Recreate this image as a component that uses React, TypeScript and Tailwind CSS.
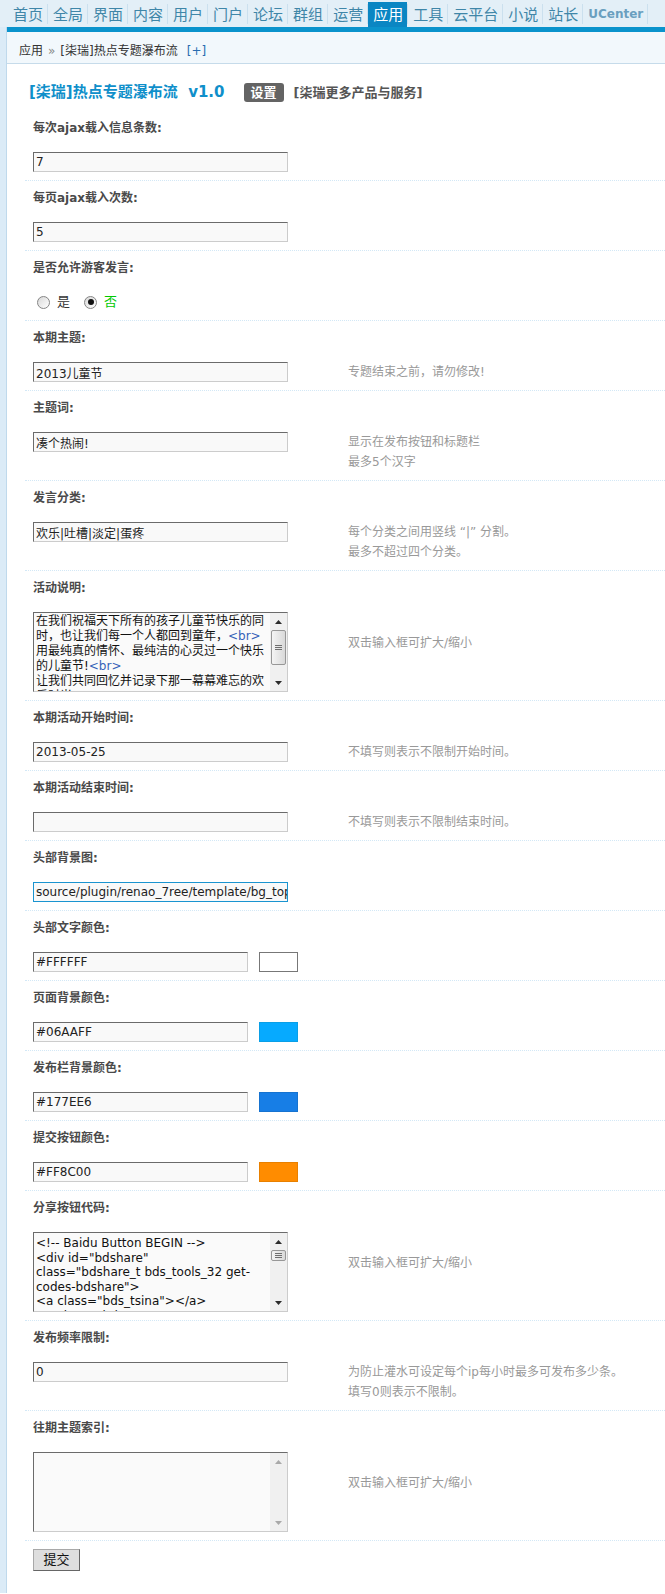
import React from 'react'

const navItems = ['首页', '全局', '界面', '内容', '用户', '门户', '论坛', '群组', '运营', '应用', '工具', '云平台', '小说', '站长']

function TopNav() {
  return (
    <div className="flex h-[27px] items-end bg-[#e3eff7] pl-[8px]">
      {navItems.map((item) => (
        <React.Fragment key={item}>
          <span
            className={
              item === '应用'
                ? "h-[25px] bg-[#0a86c3] pl-[5px] pr-[4px] font-['Noto_Sans_CJK_SC',sans-serif] text-[15px] leading-[24px] text-white"
                : "h-[25px] pl-[5px] pr-[4px] font-['Noto_Sans_CJK_SC',sans-serif] text-[15px] leading-[24px] text-[#3f86a8]"
            }
          >
            {item}
          </span>
          <span className="h-[20px] w-px self-center bg-[#cbe0ee]" />
        </React.Fragment>
      ))}
      <span className="h-[25px] pl-[5px] pr-[4px] text-[12px] font-bold leading-[24px] text-[#6a9fbf]">UCenter</span>
      <span className="h-[20px] w-px self-center bg-[#cbe0ee]" />
    </div>
  )
}

function Breadcrumb() {
  return (
    <div className="h-[32px] border-b border-[#c6dbea] bg-[#f2f8fc] pl-[12px] pt-[10px] text-[12px] leading-[18px] text-[#333]">
      应用<span className="mx-[5px] text-[#888]">»</span>[柒瑞]热点专题瀑布流
      <span className="ml-[9px] text-[#2a6cb0]">[+]</span>
    </div>
  )
}

function Row({
  label,
  children,
  hint,
  hintTop = false,
}: {
  label: React.ReactNode
  children: React.ReactNode
  hint?: React.ReactNode
  hintTop?: boolean
}) {
  return (
    <div className="border-b border-dotted border-[#d3e8f6] pb-[8px] pl-[8px]">
      <div className="pb-[15px] pt-[8px] text-[12px] font-bold leading-[18px] text-[#4a4a4a]">{label}</div>
      <div className="flex">
        <div className="w-[315px] shrink-0">{children}</div>
        {hint && (
          <div className={hintTop ? 'pt-[21px] text-[12px] leading-[20px] text-[#999]' : 'text-[12px] leading-[20px] text-[#999]'}>
            {hint}
          </div>
        )}
      </div>
    </div>
  )
}

// classic txt input: dark top/left edge, light bottom/right edge
function TextInput({ value, short = false, focused = false }: { value: string; short?: boolean; focused?: boolean }) {
  const size = short ? 'w-[215px]' : 'w-[255px]'
  const edge = focused
    ? 'border-[#1a94d0]'
    : 'border-t-[#6b6b6b] border-l-[#6b6b6b] border-r-[#cccccc] border-b-[#cccccc]'
  return (
    <input
      readOnly
      defaultValue={value}
      className={`${size} ${edge} block h-[20px] border bg-[#f9f9f9] pl-[2px] text-[12px] text-[#222] outline-none`}
    />
  )
}

function ColorInput({ value, swatch }: { value: string; swatch: string }) {
  return (
    <div className="flex items-center">
      <TextInput value={value} short />
      <span className={`${swatch} ml-[11px] block h-[20px] w-[39px] border`} />
    </div>
  )
}

function Arrow({ down = false, dim = false }: { down?: boolean; dim?: boolean }) {
  return (
    <svg width="7" height="4" viewBox="0 0 7 4" className="block">
      <path d={down ? 'M0 0h7L3.5 4z' : 'M3.5 0L7 4H0z'} fill={dim ? '#a9a9a9' : '#2b2b2b'} />
    </svg>
  )
}

function Thumb({ tall }: { tall: boolean }) {
  return (
    <div
      className={
        tall
          ? 'mx-[1px] flex h-[35px] items-center justify-center rounded-[2px] border border-[#979797] bg-gradient-to-r from-[#f4f4f4] to-[#d9d9d9]'
          : 'mx-[1px] flex h-[11px] items-center justify-center rounded-[2px] border border-[#979797] bg-gradient-to-r from-[#f4f4f4] to-[#d9d9d9]'
      }
    >
      <svg width="7" height="5" viewBox="0 0 7 5">
        <path d="M0 0.5h7M0 2.5h7M0 4.5h7" stroke="#6f6f6f" strokeWidth="1" />
      </svg>
    </div>
  )
}

function TextArea({ children, thumb }: { children?: React.ReactNode; thumb?: 'tall' | 'small' }) {
  return (
    <div className="flex h-[80px] w-[255px] border border-b-[#cccccc] border-l-[#6b6b6b] border-r-[#cccccc] border-t-[#6b6b6b] bg-[#fafafa]">
      <div className="min-w-0 flex-1 overflow-hidden pl-[2px] text-[12px] text-[#111]">{children}</div>
      <div className="flex w-[17px] shrink-0 flex-col bg-[#f0f0f0]">
        <div className="flex h-[17px] items-center justify-center">
          <Arrow dim={!thumb} />
        </div>
        {thumb && <Thumb tall={thumb === 'tall'} />}
        <div className="flex-1" />
        <div className="flex h-[17px] items-center justify-center">
          <Arrow down dim={!thumb} />
        </div>
      </div>
    </div>
  )
}

function Radio({ checked = false }: { checked?: boolean }) {
  return (
    <span className="flex h-[13px] w-[13px] items-center justify-center rounded-full border border-[#858585] bg-gradient-to-br from-[#d8d8d8] to-white">
      {checked && <span className="h-[6px] w-[6px] rounded-full bg-[#111]" />}
    </span>
  )
}

const br = <span className="text-[#3562b8]">&lt;br&gt;</span>

export default function App() {
  return (
    <div className="min-h-[1594px] bg-white font-['DejaVu_Sans','Noto_Sans_CJK_SC',sans-serif] text-[12px] text-[#333]">
      <TopNav />
      <div className="flex">
        <div className="w-[7px] shrink-0 border-r border-[#bfd9ec] bg-[#dbebf7]" />
        <div className="min-w-0 flex-1">
          <div className="h-[5px] bg-[#0a93cc]" />
          <Breadcrumb />

          <div className="pl-[18px]">
            {/* title + tabs */}
            <div className="flex h-[47px] items-start pl-[4px] pt-[19px]">
              <span className="whitespace-pre text-[15px] font-bold leading-[19px] text-[#0f8fca]">[柒瑞]热点专题瀑布流  v1.0</span>
              <span className="ml-[19px] flex h-[19px] w-[40px] items-center justify-center rounded-[3px] bg-[#646464] text-[13px] font-bold text-white">
                设置
              </span>
              <span className="ml-[10px] text-[13px] font-bold leading-[19px] text-[#555]">[柒瑞更多产品与服务]</span>
            </div>

            <Row label="每次ajax载入信息条数:">
              <TextInput value="7" />
            </Row>
            <Row label="每页ajax载入次数:">
              <TextInput value="5" />
            </Row>
            <Row label="是否允许游客发言:">
              <div className="flex h-[20px] items-center pl-[4px] text-[13px]">
                <Radio />
                <span className="ml-[7px] text-[#333]">是</span>
                <span className="ml-[14px]">
                  <Radio checked />
                </span>
                <span className="ml-[7px] text-[#00c800]">否</span>
              </div>
            </Row>
            <Row label="本期主题:" hint="专题结束之前，请勿修改!">
              <TextInput value="2013儿童节" />
            </Row>
            <Row
              label="主题词:"
              hint={
                <>
                  显示在发布按钮和标题栏
                  <br />
                  最多5个汉字
                </>
              }
            >
              <TextInput value="凑个热闹!" />
            </Row>
            <Row
              label="发言分类:"
              hint={
                <>
                  每个分类之间用竖线 “|” 分割。
                  <br />
                  最多不超过四个分类。
                </>
              }
            >
              <TextInput value="欢乐|吐槽|淡定|蛋疼" />
            </Row>
            <Row label="活动说明:" hint="双击输入框可扩大/缩小" hintTop>
              <TextArea thumb="tall">
                <div className="whitespace-nowrap pt-[1px] leading-[15px]">
                  <div>在我们祝福天下所有的孩子儿童节快乐的同</div>
                  <div>时，也让我们每一个人都回到童年，{br}</div>
                  <div>用最纯真的情怀、最纯洁的心灵过一个快乐</div>
                  <div>的儿童节!{br}</div>
                  <div>让我们共同回忆并记录下那一幕幕难忘的欢</div>
                  <div>乐时光。</div>
                </div>
              </TextArea>
            </Row>
            <Row label="本期活动开始时间:" hint="不填写则表示不限制开始时间。">
              <TextInput value="2013-05-25" />
            </Row>
            <Row label="本期活动结束时间:" hint="不填写则表示不限制结束时间。">
              <TextInput value="" />
            </Row>
            <Row label="头部背景图:">
              <TextInput value="source/plugin/renao_7ree/template/bg_top.jpg" focused />
            </Row>
            <Row label="头部文字颜色:">
              <ColorInput value="#FFFFFF" swatch="bg-white border-[#777]" />
            </Row>
            <Row label="页面背景颜色:">
              <ColorInput value="#06AAFF" swatch="bg-[#06aaff] border-[#0a9fe6]" />
            </Row>
            <Row label="发布栏背景颜色:">
              <ColorInput value="#177EE6" swatch="bg-[#177ee6] border-[#1673d0]" />
            </Row>
            <Row label="提交按钮颜色:">
              <ColorInput value="#FF8C00" swatch="bg-[#ff8c00] border-[#e88000]" />
            </Row>
            <Row label="分享按钮代码:" hint="双击输入框可扩大/缩小" hintTop>
              <TextArea thumb="small">
                <div className="whitespace-nowrap pt-[3px] leading-[14.5px]">
                  <div>&lt;!-- Baidu Button BEGIN --&gt;</div>
                  <div>&lt;div id="bdshare"</div>
                  <div>class="bdshare_t bds_tools_32 get-</div>
                  <div>codes-bdshare"&gt;</div>
                  <div>&lt;a class="bds_tsina"&gt;&lt;/a&gt;</div>
                  <div>&lt;a class="bds_tqq"&gt;&lt;/a&gt;</div>
                </div>
              </TextArea>
            </Row>
            <Row
              label="发布频率限制:"
              hint={
                <>
                  为防止灌水可设定每个ip每小时最多可发布多少条。
                  <br />
                  填写0则表示不限制。
                </>
              }
            >
              <TextInput value="0" />
            </Row>
            <Row label="往期主题索引:" hint="双击输入框可扩大/缩小" hintTop>
              <TextArea />
            </Row>

            <div className="pb-[22px] pl-[8px] pt-[8px]">
              <button
                type="button"
                className="h-[22px] w-[47px] border border-b-[#666] border-l-[#a8a8a8] border-r-[#666] border-t-[#a8a8a8] bg-[#dedede] text-[13px] text-[#111]"
              >
                提交
              </button>
            </div>
          </div>
        </div>
      </div>
    </div>
  )
}
